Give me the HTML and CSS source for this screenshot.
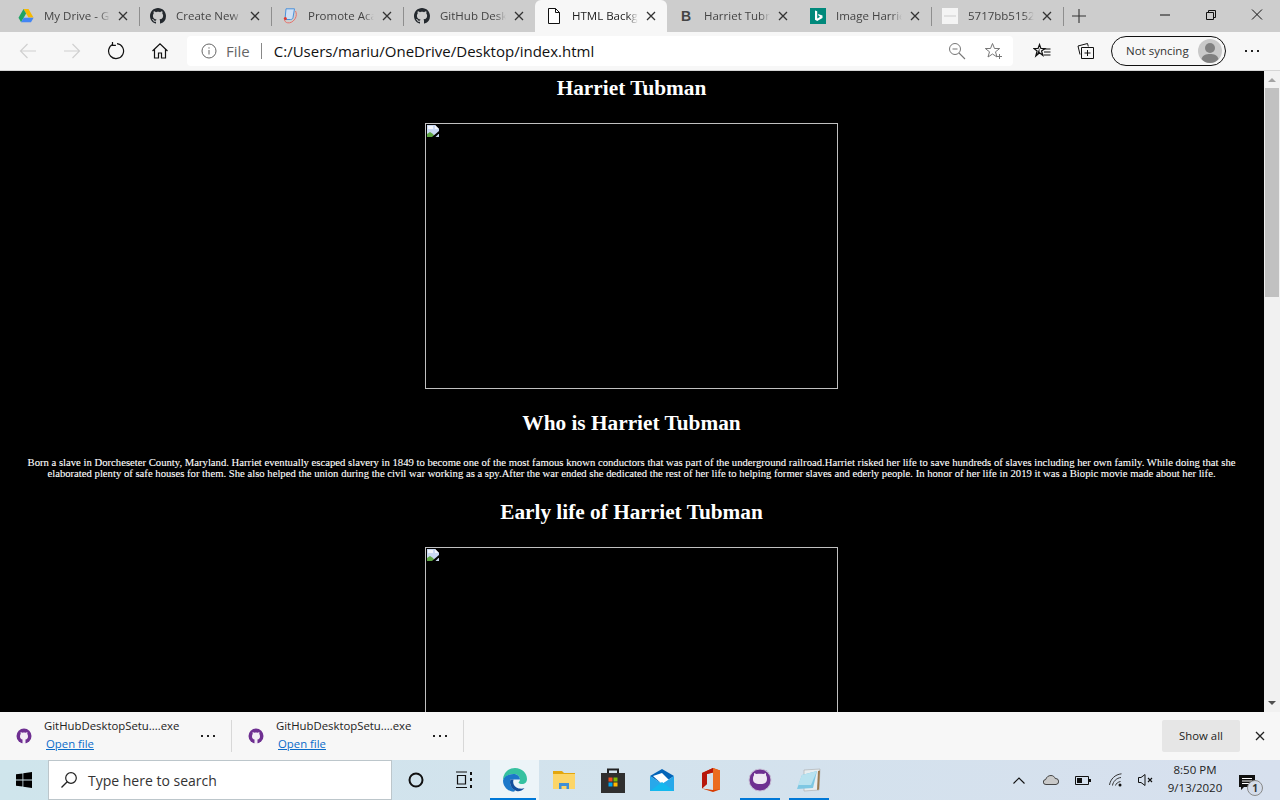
FILE: index.html
```html
<!DOCTYPE html>
<html lang="en">
<head>
  <meta charset="UTF-8">
  <title>HTML Background</title>
  <meta name="viewport" content="width=device-width, initial-scale=1.0">
  <link rel="stylesheet" href="styles.css">
</head>
<body>
  <svg class="defs" width="0" height="0">
    <symbol id="gh" viewBox="0 0 16 16"><path fill="#24292e" d="M8 0C3.58 0 0 3.58 0 8c0 3.54 2.29 6.53 5.47 7.59.4.07.55-.17.55-.38 0-.19-.01-.82-.01-1.49-2.01.37-2.53-.49-2.69-.94-.09-.23-.48-.94-.82-1.13-.28-.15-.68-.52-.01-.53.63-.01 1.08.58 1.23.82.72 1.21 1.87.87 2.33.66.07-.52.28-.87.51-1.07-1.78-.2-3.64-.89-3.64-3.95 0-.87.31-1.59.82-2.15-.08-.2-.36-1.02.08-2.12 0 0 .67-.21 2.2.82.64-.18 1.32-.27 2-.27.68 0 1.36.09 2 .27 1.53-1.04 2.2-.82 2.2-.82.44 1.1.16 1.92.08 2.12.51.56.82 1.27.82 2.15 0 3.07-1.87 3.75-3.65 3.95.29.25.54.73.54 1.48 0 1.07-.01 1.93-.01 2.2 0 .21.15.46.55.38A8.013 8.013 0 0016 8c0-4.42-3.58-8-8-8z"/></symbol>
    <symbol id="x" viewBox="0 0 10 10"><path d="M1 1l8 8M9 1l-8 8" fill="none" stroke="currentColor" stroke-width="1.3"/></symbol>
    <symbol id="ghd" viewBox="0 0 16 18"><circle cx="8" cy="9" r="7.500" fill="#6e2f91"/><path fill="#f2edf5" d="M4 9.500c0-1.100.2-1.900.7-2.500l-.1-2 1.800.7c1.100-.3 2.100-.3 3.200 0l1.800-.7-.1 2c.5.600.7 1.400.7 2.500 0 1.800-1 2.800-2.500 3.100V17H6.500v-4.400C5 12.300 4 11.300 4 9.500z"/></symbol>
    <symbol id="broken" viewBox="0 0 12 12"><path fill="#c9d8f2" d="M0 0h8l4 4v8H0z"/><path fill="#f2f5fb" d="M8 0v4h4zM1 1h5v3H1z"/><path fill="#5fa644" d="M0 12V9l3-2 3 2 2 3z"/><path fill="#000" d="M5 12l7-6v2.500L8.500 12z"/></symbol>
  </svg>

  <div class="tabstrip">
    <div class="tab">
      <svg class="favicon" viewBox="0 0 16 16"><path fill="#f7b900" d="M5.500 1h5l5 8.500h-5z"/><path fill="#1fa463" d="M5.500 1L.5 9.700l2.600 4.600 5-8.800z"/><path fill="#4285f4" d="M5.600 9.700h10l-2.600 4.600H3.100z"/></svg>
      <span class="tab-title">My Drive - G</span>
      <svg class="tab-close"><use href="#x"/></svg>
    </div>
    <div class="tab">
      <svg class="favicon"><use href="#gh"/></svg>
      <span class="tab-title">Create New</span>
      <svg class="tab-close"><use href="#x"/></svg>
    </div>
    <div class="tab">
      <svg class="favicon" viewBox="0 0 16 16"><path fill="#cfe0f5" stroke="#4a90d9" stroke-width="1" d="M4 .8h8.500L11 9.500c-.3 1.500-1.200 2-2.500 2H3z"/><path fill="none" stroke="#e8716a" stroke-width="1" d="M13.500 3c2.500 4.500-1 11-6 11.800-2.500.4-4.500-.6-5-2.800"/><circle cx="3.300" cy="10.500" r="1.500" fill="#e2382f"/></svg>
      <span class="tab-title">Promote Aca</span>
      <svg class="tab-close"><use href="#x"/></svg>
    </div>
    <div class="tab">
      <svg class="favicon"><use href="#gh"/></svg>
      <span class="tab-title">GitHub Desk</span>
      <svg class="tab-close"><use href="#x"/></svg>
    </div>
    <div class="tab tab-active">
      <svg class="favicon" viewBox="0 0 16 16"><path fill="#fff" stroke="#111" stroke-width="1" d="M2.500 .5h7l4 4v11h-11z"/><path fill="none" stroke="#111" d="M9.500 .5v4h4"/></svg>
      <span class="tab-title">HTML Backg</span>
      <svg class="tab-close"><use href="#x"/></svg>
    </div>
    <div class="tab">
      <span class="favicon bing-b">B</span>
      <span class="tab-title">Harriet Tubn</span>
      <svg class="tab-close"><use href="#x"/></svg>
    </div>
    <div class="tab">
      <svg class="favicon" viewBox="0 0 16 16"><path fill="#00897b" d="M0 0h16v16H0z"/><path fill="#fff" d="M5 2.500l2.200.8v7.200l3-1.700-1.400-.7-.9-2.200 4.600 1.600v2.400L7.200 13 5 11.800z"/></svg>
      <span class="tab-title">Image Harrie</span>
      <svg class="tab-close"><use href="#x"/></svg>
    </div>
    <div class="tab tab-last">
      <svg class="favicon" viewBox="0 0 16 16"><path fill="#f4f4f4" d="M0 0h16v16H0z"/><path fill="#ccc" d="M2 7.500h12v1H2z"/></svg>
      <span class="tab-title">5717bb5152</span>
      <svg class="tab-close"><use href="#x"/></svg>
    </div>
    <svg class="new-tab" viewBox="0 0 14 14"><path d="M7 0v14M0 7h14" stroke="#333" stroke-width="1.100"/></svg>
    <div class="win-controls">
      <svg class="win-btn" viewBox="0 0 46 30"><path d="M18 15h10" stroke="#111"/></svg>
      <svg class="win-btn" viewBox="0 0 46 30"><path d="M18.500 12.500h7v7h-7zM20.500 12.500v-2h7v7h-2" fill="none" stroke="#111"/></svg>
      <svg class="win-btn" viewBox="0 0 46 30"><path d="M18 9.500l10 10M28 9.500l-10 10" stroke="#111"/></svg>
    </div>
  </div>

  <div class="toolbar">
    <svg class="tool-icon nav-back" viewBox="0 0 18 18"><path d="M17 9H1.500M8.500 2L1.500 9l7 7" fill="none" stroke="#d0d0d0" stroke-width="1.200"/></svg>
    <svg class="tool-icon nav-fwd" viewBox="0 0 18 18"><path d="M1 9h15.500M9.500 2l7 7-7 7" fill="none" stroke="#d0d0d0" stroke-width="1.200"/></svg>
    <svg class="tool-icon nav-reload" viewBox="0 0 18 18"><path d="M6 2.200a7.500 7.500 0 1 0 4-.6" fill="none" stroke="#111" stroke-width="1.200"/><path d="M5.500 0v3.400h3.400" fill="none" stroke="#111" stroke-width="1.200"/></svg>
    <svg class="tool-icon nav-home" viewBox="0 0 18 18"><path d="M1.500 9L9 1.800 16.500 9M3.500 7.500v8.500h4v-5h3v5h4V7.500" fill="none" stroke="#111" stroke-width="1.200"/></svg>
    <div class="addressbar">
      <svg class="info-icon" viewBox="0 0 16 16"><circle cx="8" cy="8" r="7" fill="none" stroke="#666"/><path d="M8 7v4.500M8 4.300v1.300" stroke="#666"/></svg>
      <span class="addr-file">File</span>
      <span class="addr-sep"></span>
      <span class="addr-url">C:/Users/mariu/OneDrive/Desktop/index.html</span>
      <svg class="addr-zoom" viewBox="0 0 18 18"><circle cx="7" cy="7" r="5.500" fill="none" stroke="#777"/><path d="M4.500 7h5M11 11l6 6" stroke="#777" stroke-width="1.100"/></svg>
      <svg class="addr-star" viewBox="0 0 18 18"><path d="M8.500 1.500l2 5h5.200l-4.200 3.300 1.500 5.200-4.500-3-4.500 3L5.500 9.800 1.300 6.500h5.200z" fill="none" stroke="#777"/><path d="M13 14.500h5M15.500 12v5" stroke="#777"/></svg>
    </div>
    <svg class="tool-icon fav-list" viewBox="0 0 18 18"><path d="M6.500 2.500l1.400 4h4L8.600 9l1.200 4.300-3.300-2.600-3.700 3.300 1.300-5L.9 6.500h4.200z" fill="#f7f7f7" stroke="#111" stroke-width="1.200"/><path d="M3.300 14l3.200-8v5z" fill="#111"/><path d="M11 7h6.500M11 10h6.500M10.500 13h7" stroke="#111" stroke-width="1.100"/></svg>
    <svg class="tool-icon collections" viewBox="0 0 18 18"><path d="M3 12.500L1 4l9.500-2.500.8 3" fill="none" stroke="#111"/><path d="M4.500 5.500h12v11h-12z" fill="#f7f7f7" stroke="#111"/><path d="M10.500 8v6M7.500 11h6" stroke="#111"/></svg>
    <div class="sync-pill">
      <span>Not syncing</span>
      <svg class="avatar" viewBox="0 0 24 24"><circle cx="12" cy="12" r="12" fill="#c9c9c9"/><circle cx="12" cy="9" r="5" fill="#808080"/><path d="M3.500 20c1-4 4.500-5 8.500-5s7.500 1 8.500 5c-2 2.500-5 4-8.500 4s-6.500-1.500-8.500-4z" fill="#808080"/></svg>
    </div>
    <svg class="dots" viewBox="0 0 14 2"><path d="M0 0h2v2H0zM6 0h2v2H6zM12 0h2v2h-2z" fill="#222"/></svg>
  </div>

  <div class="viewport">
    <main class="page">
      <h2>Harriet Tubman</h2>
      <div class="broken-img"><svg class="broken-icon"><use href="#broken"/></svg></div>
      <h2>Who is Harriet Tubman</h2>
      <p>Born a slave in Dorcheseter County, Maryland. Harriet eventually escaped slavery in 1849 to become one of the most famous known conductors that was part of the underground railroad.Harriet risked her life to save hundreds of slaves including her own family. While doing that she elaborated plenty of safe houses for them. She also helped the union during the civil war working as a spy.After the war ended she dedicated the rest of her life to helping former slaves and ederly people. In honor of her life in 2019 it was a Biopic movie made about her life.</p>
      <h2>Early life of Harriet Tubman</h2>
      <div class="broken-img"><svg class="broken-icon"><use href="#broken"/></svg></div>
    </main>
    <div class="scrollbar">
      <svg class="scroll-arrow" viewBox="0 0 16 17"><path d="M4 11l4-4 4 4z" fill="#a3a3a3"/></svg>
      <div class="scroll-track"><div class="scroll-thumb"></div></div>
      <svg class="scroll-arrow" viewBox="0 0 16 17"><path d="M4 6l4 4 4-4z" fill="#505050"/></svg>
    </div>
  </div>

  <div class="downloads">
    <div class="dl-item">
      <svg class="dl-icon"><use href="#ghd"/></svg>
      <div class="dl-text">
        <span class="dl-name">GitHubDesktopSetu....exe</span>
        <a class="dl-open">Open file</a>
      </div>
      <svg class="dl-more" viewBox="0 0 14 2"><path d="M0 0h2v2H0zM6 0h2v2H6zM12 0h2v2h-2z" fill="#222"/></svg>
    </div>
    <div class="dl-item">
      <svg class="dl-icon"><use href="#ghd"/></svg>
      <div class="dl-text">
        <span class="dl-name">GitHubDesktopSetu....exe</span>
        <a class="dl-open">Open file</a>
      </div>
      <svg class="dl-more" viewBox="0 0 14 2"><path d="M0 0h2v2H0zM6 0h2v2H6zM12 0h2v2h-2z" fill="#222"/></svg>
    </div>
    <div class="show-all">Show all</div>
    <svg class="dl-close"><use href="#x"/></svg>
  </div>

  <div class="taskbar">
    <div class="start">
      <svg viewBox="0 0 16 16" width="16" height="16"><path fill="#000" d="M0 2.300l6.500-.9v6.200H0zM7.300 1.300L16 0v7.600H7.300zM0 8.400h6.500v6.200L0 13.700zM7.300 8.400H16V16l-8.700-1.300z"/></svg>
    </div>
    <div class="search">
      <svg viewBox="0 0 18 18" width="18" height="18"><circle cx="11" cy="7" r="5.300" fill="none" stroke="#222" stroke-width="1.200"/><path d="M7.200 10.800L1.500 16.500" stroke="#222" stroke-width="1.300"/></svg>
      <span>Type here to search</span>
    </div>
    <div class="task-slot task-cortana">
      <svg viewBox="0 0 16 16" width="16" height="16"><circle cx="8" cy="8" r="6.500" fill="none" stroke="#111" stroke-width="2"/></svg>
    </div>
    <div class="task-slot task-view">
      <svg viewBox="0 0 18 18" width="18" height="18"><path d="M1 1h11M1 16.500h11M2.500 4.500h8v8.500h-8z" fill="none" stroke="#111" stroke-width="1.200"/><path d="M15 1h2v3h-2zM15 7h2v3h-2zM15 14h2v3h-2z" fill="#111"/></svg>
    </div>
    <div class="task-slot task-active task-edge">
      <svg viewBox="0 0 24 24" width="24" height="24">
        <path fill="#35c1a0" d="M12 0c7 0 12 5 12 11 0 3-2 5-5 5-2 0-3.500-.6-3.500-1.500 1-1 1.500-2 1.500-3 0-3.500-3-5.500-6.500-5.500C6 6 1 9 0 12.500 0 5 5.500 0 12 0z"/>
        <path fill="#1c78c9" d="M0 12.500C1 8 6 6 10.500 6c3.500 0 6.500 2 6.500 5.500H7.500c-1.500 3 0 8 4.500 11 .7.500-1 1.500-3 1-5-1-9-5.500-9-11z"/>
        <path fill="#124e9c" d="M7.500 11.500c-1.500 4 .5 9.500 6 11.500 2.500.7 5.500 0 8-3-2 1-5.500 1-8-.5-3-1.700-4-5-3-8z"/>
      </svg>
    </div>
    <div class="task-slot">
      <svg viewBox="0 0 22 18" width="22" height="18"><path fill="#e3a60e" d="M0 0h9l2 2h11v4H0z"/><path fill="#fcd568" d="M0 3h22v15H0z"/><path fill="#3f8fd6" d="M6 12h10v6h-2.500v-3h-5v3H6z"/></svg>
    </div>
    <div class="task-slot">
      <svg viewBox="0 0 24 26" width="24" height="26"><path fill="none" stroke="#222" stroke-width="2" d="M7 7V2.500h10V7"/><path fill="#2f2f2f" d="M0 6h24v20H0z"/><path fill="#f25022" d="M7.500 10.500h4v4h-4z"/><path fill="#7fba00" d="M12.500 10.500h4v4h-4z"/><path fill="#00a4ef" d="M7.500 15.500h4v4h-4z"/><path fill="#ffb900" d="M12.500 15.500h4v4h-4z"/></svg>
    </div>
    <div class="task-slot">
      <svg viewBox="0 0 24 22" width="24" height="22"><path fill="#0364b8" d="M0 7l12-7 12 7-12 8z"/><path fill="#fff" d="M3 7l9-3 7 7-7 4z"/><path fill="#28a8ea" d="M0 7l12 8 12-8v15H0z"/><path fill="#14b8ee" d="M0 22l12-9 12 9z"/></svg>
    </div>
    <div class="task-slot">
      <svg viewBox="0 0 20 24" width="20" height="24"><path fill="#d83b01" d="M12 0l7 2.500v19L12 24 1 20.500l11 1.500V4.500L6 6v10l-5 4.500V5z"/><path fill="#eb6c1f" d="M12 4.500V22l7-.500v-19L12 0z"/><path fill="#b7160c" d="M1 5L12 0v4.500L6 6v10l-5 4.500z"/></svg>
    </div>
    <div class="task-slot task-open">
      <svg viewBox="0 0 24 24" width="24" height="24"><circle cx="12" cy="12" r="11" fill="#6e2f91" stroke="#c9c0d6" stroke-width="1"/><path fill="#efe7f3" d="M5 11c0-2 .4-3 1-3.800L6 5l2.500 1c2.300-.5 4.700-.5 7 0L18 5v2.200c.6.8 1 1.800 1 3.800 0 3.500-2 5-7 5s-7-1.500-7-5z"/></svg>
    </div>
    <div class="task-slot task-open">
      <svg viewBox="0 0 24 24" width="24" height="24"><path fill="#e8eef0" stroke="#a8a8a8" stroke-width=".6" d="M7 2l16-1-1 21-15 1z"/><path fill="#9a7a50" d="M21 3l2-.5-1 19-2 .5z"/><path fill="#7ec8e3" d="M5 7l15-4-4 17L0 21z"/><path fill="#b8e2ef" d="M5 7l15-4-6 14H1z"/></svg>
    </div>
    <div class="tray">
      <svg class="tray-chevron" viewBox="0 0 12 7" width="12" height="7"><path d="M.5 6.500L6 1l5.500 5.500" fill="none" stroke="#111" stroke-width="1.100"/></svg>
      <svg class="tray-cloud" viewBox="0 0 16 10" width="16" height="10"><path fill="#c9c9c9" stroke="#333" stroke-width=".9" d="M3 9.500a2.500 2.500 0 0 1-.3-5C3.400 2 5.500.5 8 .5c2 0 3.500 1.200 4.200 3a3 3 0 0 1 .8 6z"/></svg>
      <svg class="tray-battery" viewBox="0 0 16 9" width="16" height="9"><path fill="none" stroke="#111" d="M.5.500h13v8H.5z"/><path fill="#111" d="M2 2h5v5H2zM14 3h2v3h-2z"/></svg>
      <svg class="tray-wifi" viewBox="0 0 14 14" width="14" height="14"><path d="M.5 12C1.500 6 6 1.500 12.500.800M3.500 12.500C4 8.500 7.500 5 12 4.500M6.500 12.500C7 10.500 9 9 11.500 8.500" fill="none" stroke="#333" stroke-width="1"/><circle cx="11" cy="12" r="1.500" fill="#111"/></svg>
      <svg class="tray-volume" viewBox="0 0 16 12" width="16" height="12"><path d="M.5 3.500h2.500L7 .5v11l-4-3H.5z" fill="none" stroke="#111"/><path d="M10 4l4 4M14 4l-4 4" stroke="#111" stroke-width="1.100"/></svg>
      <div class="clock"><span>8:50 PM</span><span>9/13/2020</span></div>
      <div class="notif">
        <svg viewBox="0 0 16 15" width="16" height="15"><path fill="#111" d="M0 0h16v12H5l-3 3v-3H0z"/><path d="M3 3.500h10M3 6h10M3 8.500h10" stroke="#fff"/></svg>
        <span class="notif-badge">1</span>
      </div>
    </div>
  </div>
</body>
</html>
```

FILE: styles.css
```css
:root {
  --ui-font: "Open Sans", "Noto Sans", sans-serif;
  --tab-bg: #cdcdcd;
  --bar-bg: #f7f7f7;
  --text: #333;
}

* {
  box-sizing: border-box;
}

html, body {
  margin: 0;
  height: 800px;
  overflow: hidden;
}

body {
  display: flex;
  flex-direction: column;
  width: 1280px;
  font-family: var(--ui-font);
  color: var(--text);
  background: #000;
}

.defs {
  position: absolute;
}

/* tabs */
.tabstrip {
  display: flex;
  align-items: stretch;
  height: 32px;
  padding-left: 7px;
  background: var(--tab-bg);
}
.tab {
  position: relative;
  display: flex;
  align-items: center;
  width: 132px;
  padding: 0 0 1px 11px;
  font-size: 11.5px;
  color: #444;
}
.tab::after {
  content: "";
  position: absolute;
  right: -1px;
  top: 7px;
  height: 19px;
  width: 1px;
  background: #8e8e8e;
}
.tab-active {
  background: var(--bar-bg);
  border-radius: 6px 6px 0 0;
  color: #222;
}
.tab-active::after,
.tab:nth-child(4)::after,
.tab:nth-child(6)::after {
  display: none;
}
.favicon {
  flex: none;
  width: 16px;
  height: 16px;
}
.bing-b {
  font: bold 14px/16px "Liberation Sans", sans-serif;
  color: #444;
  text-align: center;
}
.tab-title {
  width: 66px;
  margin-left: 10px;
  white-space: nowrap;
  -webkit-mask-image: linear-gradient(to right, #000 84%, transparent 100%);
  mask-image: linear-gradient(to right, #000 84%, transparent 100%);
}
.tab-close {
  flex: none;
  width: 10px;
  height: 10px;
  margin-left: 8px;
  color: #333;
}
.new-tab {
  width: 14px;
  height: 14px;
  margin: 9px 0 0 9px;
}
.win-controls {
  display: flex;
  margin-left: auto;
}
.win-btn {
  width: 46px;
  height: 30px;
}

/* toolbar */
.toolbar {
  display: flex;
  align-items: center;
  height: 39px;
  padding-left: 19px;
  background: var(--bar-bg);
  border-bottom: 1px solid #d5d5d5;
}
.tool-icon {
  flex: none;
  width: 18px;
  height: 18px;
}
.nav-fwd { margin-left: 26px; }
.nav-reload { margin-left: 26px; }
.nav-home { margin-left: 26px; }
.addressbar {
  display: flex;
  align-items: center;
  width: 826px;
  height: 30px;
  margin-left: 18px;
  padding-left: 14px;
  background: #fff;
  border-radius: 4px;
  font-size: 15px;
}
.info-icon {
  width: 16px;
  height: 16px;
}
.addr-file {
  margin-left: 9px;
  color: #666;
}
.addr-sep {
  width: 1px;
  height: 16px;
  margin: 0 12px 0 11px;
  background: #888;
}
.addr-url {
  color: #111;
}
.addr-zoom {
  width: 18px;
  height: 18px;
  margin-left: auto;
}
.addr-star {
  width: 18px;
  height: 18px;
  margin: 0 11px 0 18px;
}
.fav-list { margin-left: 20px; }
.collections { margin-left: 26px; }
.sync-pill {
  display: flex;
  align-items: center;
  justify-content: space-between;
  width: 115px;
  height: 30px;
  margin-left: 16px;
  padding: 0 3px 0 14px;
  border: 1px solid #111;
  border-radius: 15px;
  font-size: 11.5px;
  color: #333;
}
.sync-pill span {
  margin-top: -2px;
}
.avatar {
  width: 24px;
  height: 24px;
}
.dots {
  width: 14px;
  height: 2px;
  margin-left: 19px;
}

/* page area */
.viewport {
  display: flex;
  height: 641px;
  overflow: hidden;
}
.page {
  width: 1264px;
  height: 641px;
  overflow: hidden;
  padding: 0 9px 0 8px;
  background: #000;
  color: #fff;
  font-family: "Liberation Serif", serif;
  text-align: center;
}
.page h2 {
  margin: 0;
  font-size: 21.3px;
  line-height: 24px;
  font-weight: bold;
}
.page h2:first-child {
  margin-top: 5px;
}
.page p {
  margin: 22px 0 21px;
  font-size: 10.68px;
  line-height: 11px;
  -webkit-text-stroke: .1px #fff;
}
.broken-img {
  width: 413px;
  height: 266px;
  margin: 23px auto 22px;
  padding: 1px 0 0 1px;
  border: 1px solid #c0c0c0;
  text-align: left;
}
.broken-icon {
  display: block;
  width: 12px;
  height: 12px;
}
.scrollbar {
  display: flex;
  flex-direction: column;
  width: 16px;
  background: #f1f1f1;
}
.scroll-arrow {
  flex: none;
  width: 16px;
  height: 17px;
}
.scroll-track {
  flex: 1;
}
.scroll-thumb {
  width: 14px;
  height: 209px;
  margin: 0 1px;
  background: #c1c1c1;
}

/* downloads */
.downloads {
  display: flex;
  align-items: center;
  height: 48px;
  background: var(--bar-bg);
  font-size: 11.35px;
}
.dl-item {
  position: relative;
  display: flex;
  align-items: center;
  width: 232px;
  height: 32px;
  padding-left: 16px;
  border-right: 1px solid #d8d8d8;
}
.dl-icon {
  flex: none;
  width: 16px;
  height: 18px;
}
.dl-text {
  display: flex;
  flex-direction: column;
  margin: -2px 0 0 12px;
  line-height: 18px;
  color: #222;
}
.dl-name {
  white-space: nowrap;
}
.dl-open {
  margin-left: 2px;
  color: #0a6cc9;
  text-decoration: underline;
}
.dl-more {
  position: absolute;
  right: 16px;
  top: 15px;
  width: 14px;
  height: 2px;
}
.show-all {
  width: 78px;
  height: 32px;
  margin-left: auto;
  background: #e6e6e6;
  border-radius: 2px;
  line-height: 32px;
  text-align: center;
  color: #222;
}
.dl-close {
  width: 10px;
  height: 10px;
  margin: 0 15px;
  color: #222;
}

/* taskbar */
.taskbar {
  display: flex;
  height: 40px;
  background: linear-gradient(to right, #cfe5ec, #d7e0ee);
}
.start {
  display: flex;
  align-items: center;
  justify-content: center;
  width: 48px;
}
.search {
  display: flex;
  align-items: center;
  width: 344px;
  padding-left: 11px;
  background: #fff;
  border: 1px solid #bcc6cb;
  font-size: 14px;
  color: #333;
}
.search span {
  margin-left: 10px;
}
.task-slot {
  position: relative;
  display: flex;
  align-items: center;
  justify-content: center;
  width: 49px;
}
.task-cortana { padding-right: 2px; }
.task-view { padding-right: 3px; }
.task-open::after,
.task-active::after {
  content: "";
  position: absolute;
  left: 5px;
  right: 4px;
  bottom: 0;
  height: 2px;
  background: #0078d7;
}
.task-active {
  background: #ecf4f8;
}
.task-edge::after {
  left: 0;
  right: 3px;
}
.tray {
  display: flex;
  align-items: center;
  flex: 1;
  position: relative;
  padding-left: 180px;
}
.tray-cloud { margin-left: 18px; }
.tray-battery { margin-left: 16px; }
.tray-wifi { margin-left: 18px; }
.tray-volume { margin-left: 15px; }
.clock {
  display: flex;
  flex-direction: column;
  align-items: center;
  width: 60px;
  margin: -2px 0 0 11px;
  font-size: 11.5px;
  line-height: 18px;
  color: #222;
}
.notif {
  position: relative;
  width: 16px;
  height: 15px;
  margin-left: 14px;
}
.notif-badge {
  position: absolute;
  left: 8px;
  top: 7px;
  width: 16px;
  height: 16px;
  border: 1px solid #888;
  border-radius: 50%;
  background: #d4dcea;
  font-size: 10px;
  font-weight: bold;
  line-height: 14px;
  text-align: center;
  color: #333;
}
```
